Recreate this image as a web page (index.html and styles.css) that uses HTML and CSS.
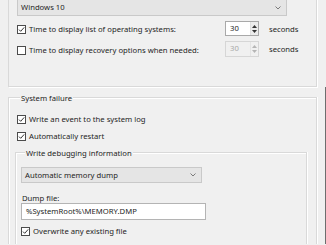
FILE: index.html
```
<!DOCTYPE html>
<html lang="en">
<head>
<meta charset="utf-8">
<title>Startup and Recovery</title>
<link rel="stylesheet" href="styles.css">
</head>
<body>
<div class="grp-top">
  <div class="combo combo-os"><span>Windows 10</span><svg class="chev" width="6" height="4" viewBox="0 0 6 4"><path d="M0.5 0.5 L3 3 L5.5 0.5" fill="none" stroke="#7a7a7a" stroke-width="1"/></svg></div>
  <div class="trow trow-1">
    <label class="chk"><svg class="box" width="9" height="9" viewBox="0 0 9 9"><rect x="0.5" y="0.5" width="8" height="8" fill="#fff" stroke="#4b4b4b"/><path d="M2 4.6 L3.7 6.3 L7.2 2.4" fill="none" stroke="#333" stroke-width="1"/></svg><span>Time to display list of operating systems:</span></label>
    <div class="spin"><span class="val">30</span><span class="btns"><svg width="5" height="3" viewBox="0 0 5 3"><path d="M0 3 L2.5 0 L5 3Z" fill="#333"/></svg><svg width="5" height="3" viewBox="0 0 5 3"><path d="M0 0 L2.5 3 L5 0Z" fill="#333"/></svg></span></div>
    <span class="unit">seconds</span>
  </div>
  <div class="trow">
    <label class="chk"><svg class="box" width="9" height="9" viewBox="0 0 9 9"><rect x="0.5" y="0.5" width="8" height="8" fill="#fff" stroke="#4b4b4b"/></svg><span>Time to display recovery options when needed:</span></label>
    <div class="spin spin-off"><span class="val">30</span><span class="btns"><svg width="5" height="3" viewBox="0 0 5 3"><path d="M0 3 L2.5 0 L5 3Z" fill="#b5b5b5"/></svg><svg width="5" height="3" viewBox="0 0 5 3"><path d="M0 0 L2.5 3 L5 0Z" fill="#b5b5b5"/></svg></span></div>
    <span class="unit">seconds</span>
  </div>
</div>
<div class="lower">
  <div class="grp grp-sys">
    <div class="legend">System failure</div>
    <label class="crow crow-first"><svg class="box" width="9" height="9" viewBox="0 0 9 9"><rect x="0.5" y="0.5" width="8" height="8" fill="#fff" stroke="#4b4b4b"/><path d="M2 4.6 L3.7 6.3 L7.2 2.4" fill="none" stroke="#333" stroke-width="1"/></svg><span>Write an event to the system log</span></label>
    <label class="crow"><svg class="box" width="9" height="9" viewBox="0 0 9 9"><rect x="0.5" y="0.5" width="8" height="8" fill="#fff" stroke="#4b4b4b"/><path d="M2 4.6 L3.7 6.3 L7.2 2.4" fill="none" stroke="#333" stroke-width="1"/></svg><span>Automatically restart</span></label>
    <div class="grp grp-dbg">
      <div class="legend">Write debugging information</div>
      <div class="combo combo-dump"><span>Automatic memory dump</span><svg class="chev" width="6" height="4" viewBox="0 0 6 4"><path d="M0.5 0.5 L3 3 L5.5 0.5" fill="none" stroke="#7a7a7a" stroke-width="1"/></svg></div>
      <div class="flabel">Dump file:</div>
      <div class="tbox">%SystemRoot%\MEMORY.DMP</div>
      <label class="crow crow-ow"><svg class="box" width="9" height="9" viewBox="0 0 9 9"><rect x="0.5" y="0.5" width="8" height="8" fill="#fff" stroke="#4b4b4b"/><path d="M2 4.6 L3.7 6.3 L7.2 2.4" fill="none" stroke="#333" stroke-width="1"/></svg><span>Overwrite any existing file</span></label>
    </div>
  </div>
</div>
</body>
</html>
```
FILE: styles.css
```
* { box-sizing: border-box; }
html, body { margin: 0; padding: 0; }
body {
  width: 326px;
  height: 245px;
  overflow: hidden;
  background: #f0f0f0;
  font-family: "Noto Sans", "Open Sans", sans-serif;
  font-size: 7.7px;
  color: #1e1e1e;
  line-height: 11px;
}
svg { display: block; }

.grp-top {
  margin: 0 9px 0 8px;
  height: 88px;
  border: 1px solid #d9d9d9;
  border-top: none;
  box-shadow: 1px 1px 0 #fff;
  padding: 0 29px 0 8px;
}

.combo {
  display: flex;
  align-items: center;
  justify-content: space-between;
  background: #e5e5e5;
  border: 1px solid #c9c9c9;
  padding: 0 5px 0 3px;
}
.combo-os { margin-top: -1px; height: 17px; }

.trow {
  display: grid;
  grid-template-columns: 198px 34px auto;
  column-gap: 10px;
  align-items: center;
  height: 15px;
  margin-top: 5px;
}
.trow + .trow { height: 16px; margin-top: 5px; }

.chk, .crow {
  display: flex;
  align-items: center;
  gap: 3px;
  white-space: nowrap;
}
.chk { margin-top: 2px; }

.spin {
  display: flex;
  height: 100%;
  border: 1px solid #a9a9a9;
  background: #fff;
}
.spin .val {
  flex: 1;
  padding-left: 4px;
  line-height: 13px;
}
.spin .btns {
  width: 8px;
  display: flex;
  flex-direction: column;
  justify-content: center;
  align-items: center;
  gap: 2px;
  background: #ececec;
  border-left: 1px solid #e0e0e0;
}
.spin-off { border-color: #d6d6d6; background: #f0f0f0; color: #a8a8a8; }
.spin-off .btns { background: #f0f0f0; border-left-color: #e4e4e4; }
.unit { margin-top: 1px; }

.lower {
  border-right: 1px solid #6e6e6e;
  padding-top: 10px;
  height: 157px;
  overflow: hidden;
}

.grp {
  border: 1px solid #d9d9d9;
  border-bottom: none;
  box-shadow: inset 1px 1px 0 #fff, 1px 0 0 #fff;
}
.grp-sys {
  margin: 0 8px 0 8px;
  height: 200px;
  padding: 0 9px 0 6px;
}
.legend {
  display: block;
  width: fit-content;
  height: 12px;
  margin: -6px 0 0 5px;
  padding: 0 1px;
  background: #f0f0f0;
  line-height: 12px;
}
.crow { height: 17px; margin-left: 2px; }
.crow-first { margin-top: 7px; }
.grp-dbg {
  margin-top: 7px;
  height: 120px;
  padding: 0 0 0 5px;
}
.grp-dbg .legend { margin-left: 4px; }
.combo-dump {
  margin-top: 8px;
  width: 181px;
  height: 16px;
}
.flabel {
  margin-top: 10px;
  height: 10px;
  line-height: 10px;
  padding-left: 1px;
}
.tbox {
  width: 185px;
  height: 17px;
  background: #fff;
  border: 1px solid #b4b4b4;
  padding-left: 4px;
  line-height: 15px;
}
.crow-ow { margin-top: 3px; margin-left: 0; }
```
